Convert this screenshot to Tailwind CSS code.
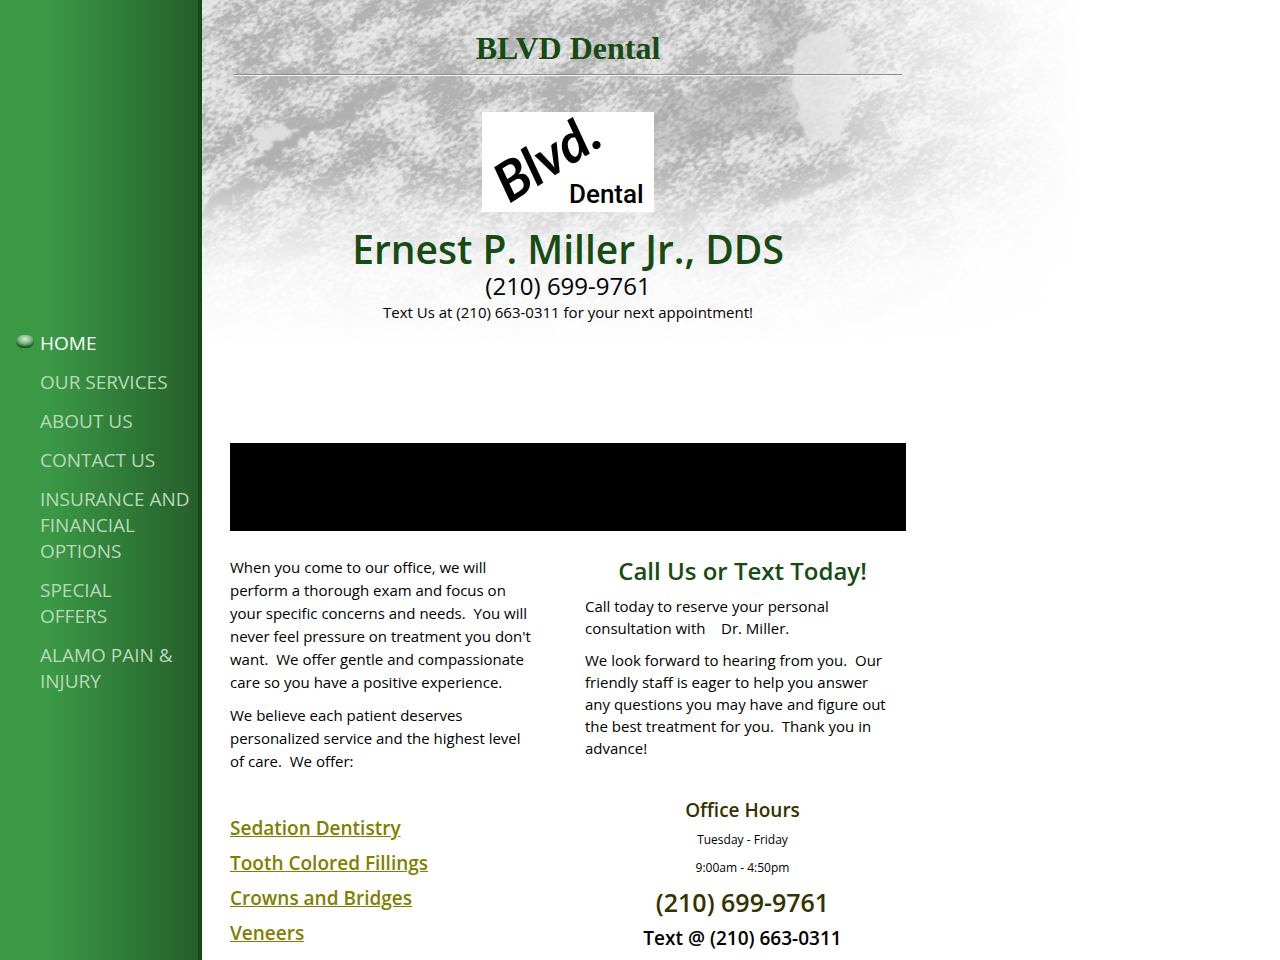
<!DOCTYPE html>
<html lang="en">

<head>
    <meta charset="UTF-8">
    <meta name="viewport" content="width=device-width, initial-scale=1.0">
    <title>BLVD Dental</title>
    <script src="https://cdn.jsdelivr.net/npm/@tailwindcss/browser@4"></script>
</head>

<body class="bg-white text-black font-['Trebuchet_MS','Open_Sans',sans-serif]">
    <div class="relative flex h-screen overflow-hidden">

        <!-- Sidebar -->
        <nav class="w-[202px] shrink-0 border-r-4 border-[#164b14] bg-linear-to-r from-[#3b9946] from-25% to-[#255f2c] pt-[330px] pl-4 pr-1">
            <ul class="space-y-[13px] text-[19px] leading-[26px] uppercase text-[#b9d9b9]">
                <li class="flex items-start text-white">
                    <svg class="mt-1 mr-1 h-4 w-5 shrink-0" viewBox="0 0 20 16">
                        <defs>
                            <radialGradient id="bead" cx="50%" cy="30%" r="65%">
                                <stop offset="0" stop-color="#d4ecd4" />
                                <stop offset="0.55" stop-color="#7fb884" />
                                <stop offset="1" stop-color="#17521c" />
                            </radialGradient>
                        </defs>
                        <rect x="0" y="1" width="18" height="13" rx="7" ry="6" fill="url(#bead)" />
                    </svg>
                    <a href="#">Home</a>
                </li>
                <li class="pl-6"><a href="#">Our Services</a></li>
                <li class="pl-6"><a href="#">About Us</a></li>
                <li class="pl-6"><a href="#">Contact Us</a></li>
                <li class="pl-6"><a href="#">Insurance and<br>Financial<br>Options</a></li>
                <li class="pl-6"><a href="#">Special<br>Offers</a></li>
                <li class="pl-6"><a href="#">Alamo Pain &amp;<br>Injury</a></li>
            </ul>
        </nav>

        <!-- Main -->
        <main class="relative flex-1">
            <!-- Stone texture behind the header -->
            <svg class="absolute left-0 top-0 -z-10 h-[360px] w-[900px]" viewBox="0 0 900 360">
                <defs>
                    <filter id="stone" x="0" y="0" width="100%" height="100%" color-interpolation-filters="sRGB">
                        <feTurbulence type="fractalNoise" baseFrequency="0.02 0.04" numOctaves="6" seed="4" result="big" />
                        <feTurbulence type="fractalNoise" baseFrequency="0.16 0.3" numOctaves="4" seed="8" result="fine" />
                        <feColorMatrix in="big" values="1 0 0 0 0  1 0 0 0 0  1 0 0 0 0  0 0 0 0 1" result="bigGray" />
                        <feColorMatrix in="fine" values="1 0 0 0 0  1 0 0 0 0  1 0 0 0 0  0 0 0 0 1" />
                        <feComposite in="bigGray" operator="arithmetic" k2="0.5" k3="0.5" />
                        <feComponentTransfer>
                            <feFuncR type="table" tableValues="0.7 0.7 0.7 0.7 0.7 0.79 0.88 0.91 0.92 0.92 0.92" />
                            <feFuncG type="table" tableValues="0.7 0.7 0.7 0.7 0.7 0.79 0.88 0.91 0.92 0.92 0.92" />
                            <feFuncB type="table" tableValues="0.7 0.7 0.7 0.7 0.7 0.79 0.88 0.91 0.92 0.92 0.92" />
                        </feComponentTransfer>
                    </filter>
                    <filter id="rough" x="-10%" y="-10%" width="120%" height="120%">
                        <feTurbulence type="fractalNoise" baseFrequency="0.08" numOctaves="5" seed="3" />
                        <feDisplacementMap in="SourceGraphic" scale="18" xChannelSelector="R" yChannelSelector="G" />
                        <feGaussianBlur stdDeviation="0.8" />
                    </filter>
                    <linearGradient id="fadeRight">
                        <stop offset="0" stop-color="#fff" />
                        <stop offset="0.64" stop-color="#fff" />
                        <stop offset="0.77" stop-color="#777" />
                        <stop offset="0.87" stop-color="#333" />
                        <stop offset="0.98" stop-color="#000" />
                    </linearGradient>
                    <linearGradient id="fadeDown" x2="0" y2="1">
                        <stop offset="0.46" stop-color="#fff" stop-opacity="0" />
                        <stop offset="0.6" stop-color="#fff" stop-opacity="0.5" />
                        <stop offset="0.74" stop-color="#fff" stop-opacity="0.85" />
                        <stop offset="0.97" stop-color="#fff" />
                    </linearGradient>
                    <mask id="edge">
                        <rect width="900" height="360" fill="url(#fadeRight)" />
                    </mask>
                </defs>
                <g mask="url(#edge)">
                    <rect x="-150" y="-150" width="1150" height="900" transform="rotate(-28 0 0)" filter="url(#stone)" />
                    <g filter="url(#rough)">
                        <path d="M75 120 L98 128 L125 122 L150 100 L190 82 L215 76 L165 98 L145 122 L115 132 L100 138 L60 170 L48 164 L90 134 Z" fill="#b0b0b0" />
                        <path d="M0 202 L40 182 L80 182 L45 190 L0 222 Z" fill="#b0b0b0" />
                        <path d="M52 136 L74 121 L96 132 L64 150 Z" fill="#dedede" />
                        <path d="M548 0 L600 0 L612 30 L585 60 L592 95 L603 115 L605 138 L560 130 L520 140 L470 150 L440 180 L440 105 L530 72 L560 58 Z" fill="#a6a6a6" fill-opacity="0.4" />
                        <path d="M588 50 L610 30 L640 24 L657 75 L645 105 L640 138 L615 145 L603 135 L590 95 Z" fill="#dedede" fill-opacity="0.8" />
                        <path d="M615 180 L640 162 L655 168 L635 182 L590 200 L560 205 Z" fill="#b0b0b0" fill-opacity="0.8" />
                    </g>
                </g>
                <rect width="900" height="360" fill="url(#fadeDown)" />
            </svg>

            <div class="ml-7 w-[676px] max-w-full">
                <header class="text-center">
                    <h1 class="mx-1 h-[75px] border-b border-[#8a8a8a] pt-7 font-['Liberation_Serif',serif] text-[32px] leading-10 font-bold text-[#164b14] shadow-[0_1px_0_#f5f5f5]">BLVD Dental</h1>
                    <svg class="mx-auto mt-[37px] h-[100px] w-[172px] bg-white" viewBox="0 0 172 100" role="img" aria-label="Blvd. Dental">
                        <text x="27" y="92" transform="rotate(-32 27 92)" font-family="Lato, sans-serif" font-size="54" font-style="italic" font-weight="700">Blvd.</text>
                        <text x="87" y="91" font-family="Roboto, sans-serif" font-size="26" font-weight="500">Dental</text>
                    </svg>
                    <h2 class="mt-3 text-[39px] leading-[49px] font-semibold text-[#164b14]">Ernest P. Miller Jr., DDS</h2>
                    <p class="text-2xl leading-[26px]">(210) 699-9761</p>
                    <p class="text-[15px] leading-[26px]">Text Us at (210) 663-0311 for your next appointment!</p>
                </header>

                <div class="mt-[118px] h-[88px] bg-black"></div>

                <div class="mt-[25px] grid grid-cols-[315px_315px] gap-x-10">
                    <section class="text-[15px] leading-[23px]">
                        <p>When you come to our office, we will<br>perform a thorough exam and focus on<br>your specific concerns and needs.&nbsp; You will<br>never feel pressure on treatment you don't<br>want.&nbsp; We offer gentle and compassionate<br>care so you have a positive experience.</p>
                        <p class="mt-[10px]">We believe each patient deserves<br>personalized service and the highest level<br>of care.&nbsp; We offer:</p>
                        <ul class="mt-[42px] space-y-[9px] text-[19px] leading-[26px] font-semibold text-[#808000] underline">
                            <li><a href="#">Sedation Dentistry</a></li>
                            <li><a href="#">Tooth Colored Fillings</a></li>
                            <li><a href="#">Crowns and Bridges</a></li>
                            <li><a href="#">Veneers</a></li>
                        </ul>
                    </section>
                    <section class="text-[15px] leading-[22px]">
                        <h3 class="text-center text-2xl leading-[29px] font-semibold text-[#164b14]">Call Us or Text Today!</h3>
                        <p class="mt-[10px]">Call today to reserve your personal<br>consultation with&nbsp;&nbsp;&nbsp; Dr. Miller.</p>
                        <p class="mt-[10px]">We look forward to hearing from you.&nbsp; Our<br>friendly staff is eager to help you answer<br>any questions you may have and figure out<br>the best treatment for you.&nbsp; Thank you in<br>advance!</p>
                        <div class="mt-[35px] text-center">
                            <h4 class="text-[19px] leading-8 font-semibold text-[#333300]">Office Hours</h4>
                            <p class="text-xs leading-7">Tuesday - Friday</p>
                            <p class="text-xs leading-7">9:00am - 4:50pm</p>
                            <p class="text-[25px] leading-10 font-semibold text-[#333300]">(210) 699-9761</p>
                            <p class="text-[19px] leading-8 font-semibold">Text @ (210) 663-0311</p>
                        </div>
                    </section>
                </div>
            </div>
        </main>
    </div>
</body>

</html>
